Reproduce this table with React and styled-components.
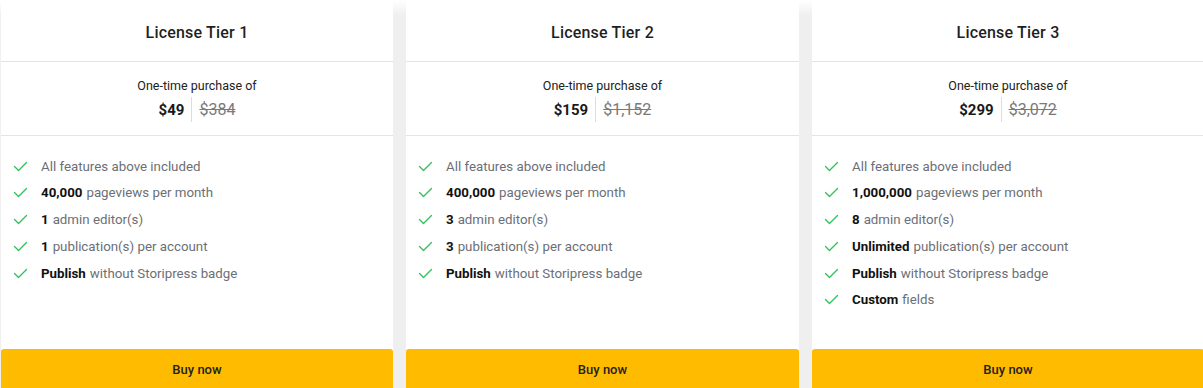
import React from "react";
import styled, { createGlobalStyle } from "styled-components";

const GlobalStyle = createGlobalStyle`
  html, body {
    margin: 0;
    padding: 0;
    background: #ffffff;
    font-family: Roboto, "Liberation Sans", sans-serif;
    overflow: hidden;
  }
`;

const Row = styled.div`
  display: flex;
  gap: 13px;
  padding-left: 1px;
  height: 389px;
  width: 1230px;
  background: linear-gradient(#ffffff 0px, #efefef 16px);
`;

const Card = styled.div`
  width: ${(p) => (p.$wide ? 393 : 392)}px;
  flex: none;
  display: flex;
  flex-direction: column;
  background: #ffffff;
`;

const Header = styled.div`
  height: 62px;
  box-sizing: border-box;
  padding-top: 3px;
  display: flex;
  align-items: center;
  justify-content: center;
  border-bottom: 1px solid #e4e4e4;
  font-size: 16px;
  font-weight: 500;
  color: #1f1f1f;
  letter-spacing: 0.2px;
`;

const PriceBox = styled.div`
  padding: 16px 0 13px;
  height: 44px;
  display: flex;
  flex-direction: column;
  align-items: center;
  border-bottom: 1px solid #e4e4e4;
`;

const PriceLabel = styled.div`
  font-size: 12.5px;
  line-height: 16px;
  color: #222;
`;

const PriceRow = styled.div`
  display: flex;
  align-items: center;
  margin-top: 3px;
  height: 25px;
`;

const Price = styled.span`
  font-size: 15px;
  font-weight: 700;
  color: #1a1a1a;
  padding-right: 7px;
`;

const Divider = styled.span`
  width: 1px;
  height: 25px;
  background: #dddddd;
`;

const OldPrice = styled.span`
  font-size: 16px;
  color: #7a7a7a;
  text-decoration: line-through;
  padding-left: 7px;
`;

const Features = styled.ul`
  list-style: none;
  margin: 0;
  padding: 21px 0 0 12px;
  display: flex;
  flex-direction: column;
  gap: 8.8px;
`;

const Feature = styled.li`
  display: flex;
  align-items: center;
  height: 18px;
  font-size: 13.3px;
  color: #6b6f76;

  b {
    color: #111;
    font-weight: 700;
    margin-right: 4px;
  }
`;

const Check = styled.svg`
  width: 15px;
  height: 11px;
  margin-right: 13px;
  flex: none;
`;

const BuyButton = styled.button`
  margin-top: auto;
  height: 40px;
  border: none;
  border-radius: 3px 3px 0 0;
  background: #ffbb00;
  color: #222;
  font-family: Roboto, "Liberation Sans", sans-serif;
  font-size: 13px;
  font-weight: 500;
  cursor: pointer;
`;

const tiers = [
  {
    name: "License Tier 1",
    price: "$49",
    old: "$384",
    features: [
      ["", "All features above included"],
      ["40,000", "pageviews per month"],
      ["1", "admin editor(s)"],
      ["1", "publication(s) per account"],
      ["Publish", "without Storipress badge"],
    ],
  },
  {
    name: "License Tier 2",
    price: "$159",
    old: "$1,152",
    features: [
      ["", "All features above included"],
      ["400,000", "pageviews per month"],
      ["3", "admin editor(s)"],
      ["3", "publication(s) per account"],
      ["Publish", "without Storipress badge"],
    ],
  },
  {
    name: "License Tier 3",
    price: "$299",
    old: "$3,072",
    features: [
      ["", "All features above included"],
      ["1,000,000", "pageviews per month"],
      ["8", "admin editor(s)"],
      ["Unlimited", "publication(s) per account"],
      ["Publish", "without Storipress badge"],
      ["Custom", "fields"],
    ],
  },
];

function CheckIcon() {
  return (
    <Check viewBox="0 0 15 11">
      <polyline
        points="1.5,5.5 5.5,9.5 13.5,1.5"
        fill="none"
        stroke="#2fc25b"
        strokeWidth="1.3"
        strokeLinecap="round"
        strokeLinejoin="round"
      />
    </Check>
  );
}

export default function App() {
  return (
    <>
      <GlobalStyle />
      <Row>
        {tiers.map((tier, i) => (
          <Card key={tier.name} $wide={i === 1}>
            <Header>{tier.name}</Header>
            <PriceBox>
              <PriceLabel>One-time purchase of</PriceLabel>
              <PriceRow>
                <Price>{tier.price}</Price>
                <Divider />
                <OldPrice>{tier.old}</OldPrice>
              </PriceRow>
            </PriceBox>
            <Features>
              {tier.features.map(([bold, rest]) => (
                <Feature key={rest}>
                  <CheckIcon />
                  {bold && <b>{bold}</b>}
                  {rest}
                </Feature>
              ))}
            </Features>
            <BuyButton>Buy now</BuyButton>
          </Card>
        ))}
      </Row>
    </>
  );
}
